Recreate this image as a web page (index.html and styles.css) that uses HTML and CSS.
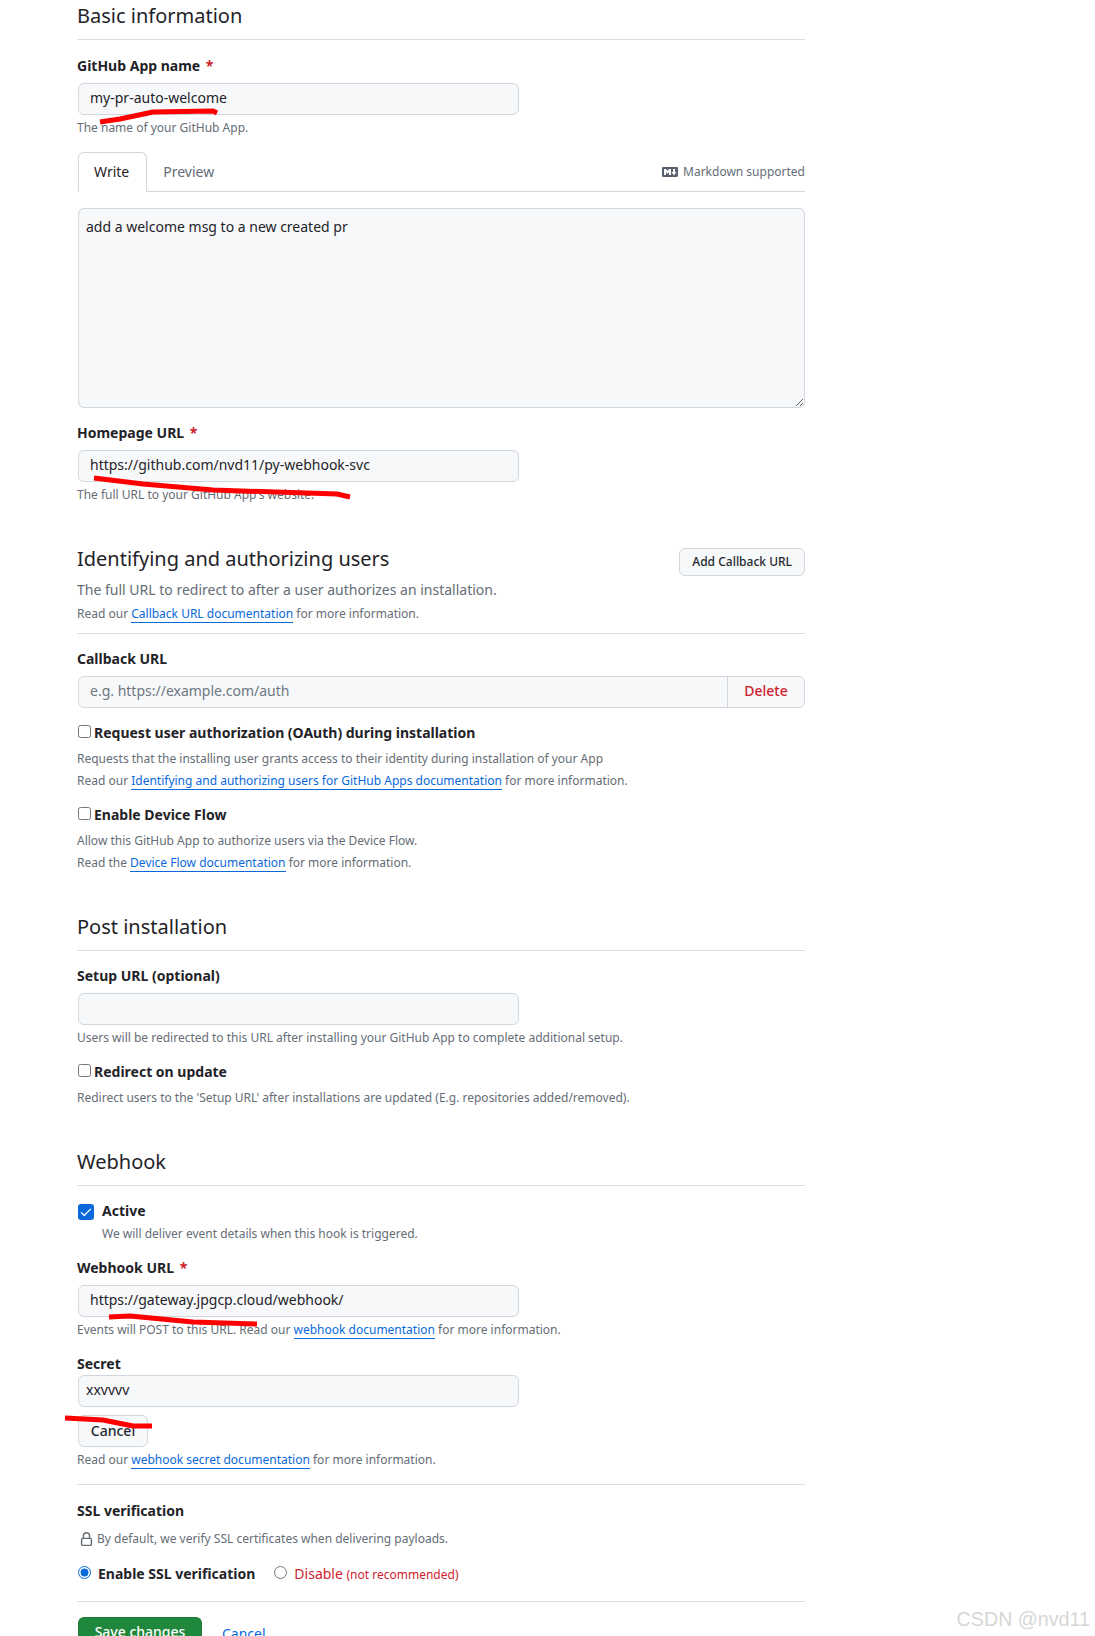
FILE: index.html
```html
<!DOCTYPE html>
<html lang="en">
<head>
  <meta charset="UTF-8" />
  <title>Edit GitHub App</title>
  <link rel="stylesheet" href="styles.css">
</head>
<body>
  <form class="container">
    <!-- Basic information -->
    <div class="subhead first">
      <h2>Basic information</h2>
    </div>
    <div class="field app-name">
      <label class="field-label">GitHub App name <span class="req">*</span></label>
      <input class="text-input short" type="text" value="my-pr-auto-welcome" />
      <p class="note">The name of your GitHub App.</p>
    </div>

    <div class="tabs">
      <span class="tab active">Write</span>
      <span class="tab">Preview</span>
      <span class="md-hint">
        <svg class="md-icon" viewBox="0 0 16 16" width="16" height="16"><path d="M14.85 3c.63 0 1.15.52 1.14 1.15v7.7c0 .63-.51 1.15-1.15 1.15H1.15C.52 13 0 12.48 0 11.84V4.15C0 3.52.52 3 1.15 3ZM9 11V5H7L5.5 7 4 5H2v6h2V8l1.5 1.92L7 8v3Zm2.99.5L14.5 8H13V5h-2v3H9.5Z"/></svg>
        Markdown supported
      </span>
    </div>
    <textarea class="desc">add a welcome msg to a new created pr</textarea>

    <div class="field homepage">
      <label class="field-label">Homepage URL <span class="req">*</span></label>
      <input class="text-input short" type="text" value="https://github.com/nvd11/py-webhook-svc" />
      <p class="note">The full URL to your GitHub App's website.</p>
    </div>

    <!-- Identifying and authorizing users -->
    <div class="auth-head">
      <div class="auth-row">
        <h2>Identifying and authorizing users</h2>
        <button type="button" class="btn btn-sm">Add Callback URL</button>
      </div>
      <p class="lead">The full URL to redirect to after a user authorizes an installation.</p>
      <p class="note">Read our <a href="#">Callback URL documentation</a> for more information.</p>
    </div>
    <div class="field callback">
      <label class="field-label">Callback URL</label>
      <div class="input-group">
        <input class="text-input grouped" type="text" placeholder="e.g. https://example.com/auth" />
        <button type="button" class="btn-delete">Delete</button>
      </div>
    </div>
    <div class="check-block oauth">
      <label class="check-label"><input type="checkbox" />Request user authorization (OAuth) during installation</label>
      <p class="note">Requests that the installing user grants access to their identity during installation of your App</p>
      <p class="note">Read our <a href="#">Identifying and authorizing users for GitHub Apps documentation</a> for more information.</p>
    </div>
    <div class="check-block device">
      <label class="check-label"><input type="checkbox" />Enable Device Flow</label>
      <p class="note">Allow this GitHub App to authorize users via the Device Flow.</p>
      <p class="note">Read the <a href="#">Device Flow documentation</a> for more information.</p>
    </div>

    <!-- Post installation -->
    <div class="subhead post">
      <h2>Post installation</h2>
    </div>
    <div class="field setup">
      <label class="field-label">Setup URL (optional)</label>
      <input class="text-input short" type="text" />
      <p class="note">Users will be redirected to this URL after installing your GitHub App to complete additional setup.</p>
    </div>
    <div class="check-block redirect">
      <label class="check-label"><input type="checkbox" />Redirect on update</label>
      <p class="note">Redirect users to the 'Setup URL' after installations are updated (E.g. repositories added/removed).</p>
    </div>

    <!-- Webhook -->
    <div class="subhead webhook">
      <h2>Webhook</h2>
    </div>
    <div class="active-row">
      <span class="blue-check">
        <svg viewBox="0 0 16 16" width="14" height="14"><path d="M13.78 4.22a.75.75 0 0 1 0 1.06l-7.25 7.25a.75.75 0 0 1-1.06 0L2.22 9.28a.751.751 0 0 1 .018-1.042.751.751 0 0 1 1.042-.018L6 10.94l6.72-6.72a.75.75 0 0 1 1.06 0Z"/></svg>
      </span>
      <div>
        <div class="active-title">Active</div>
        <p class="note active-note">We will deliver event details when this hook is triggered.</p>
      </div>
    </div>
    <div class="field webhook-url">
      <label class="field-label">Webhook URL <span class="req">*</span></label>
      <input class="text-input short" type="text" value="https://gateway.jpgcp.cloud/webhook/" />
      <p class="note">Events will POST to this URL. Read our <a href="#">webhook documentation</a> for more information.</p>
    </div>
    <div class="field secret">
      <label class="field-label tight">Secret</label>
      <input class="text-input short secret-input" type="text" value="xxvvvv" />
      <button type="button" class="btn btn-cancel">Cancel</button>
      <p class="note">Read our <a href="#">webhook secret documentation</a> for more information.</p>
    </div>

    <div class="ssl">
      <div class="ssl-title">SSL verification</div>
      <p class="note ssl-note">
        <svg class="lock" viewBox="0 0 16 16" width="16" height="16"><path d="M4 4a4 4 0 0 1 8 0v2h.25c.966 0 1.75.784 1.75 1.75v5.5A1.75 1.75 0 0 1 12.25 15h-8.5A1.75 1.75 0 0 1 2 13.25v-5.5C2 6.784 2.784 6 3.75 6H4Zm8.25 3.5h-8.5a.25.25 0 0 0-.25.25v5.5c0 .138.112.25.25.25h8.5a.25.25 0 0 0 .25-.25v-5.5a.25.25 0 0 0-.25-.25ZM10.5 6V4a2.5 2.5 0 1 0-5 0v2Z"/></svg>
        By default, we verify SSL certificates when delivering payloads.
      </p>
      <div class="radio-row">
        <label class="radio-label strong"><input type="radio" name="ssl" checked />Enable SSL verification</label>
        <label class="radio-label danger"><input type="radio" name="ssl" />Disable <small>(not recommended)</small></label>
      </div>
    </div>

    <div class="actions">
      <button type="button" class="btn-save">Save changes</button>
      <a href="#" class="cancel-link">Cancel</a>
    </div>
  </form>

  <!-- red pen marks drawn over the screenshot -->
  <svg class="scribbles" width="1095" height="1636" viewBox="0 0 1095 1636">
    <path d="M100 122 L120 119 L153 112 L213 111 L217 113" />
    <path d="M94 478 L143 484 L213 490 L337 494 L350 497" />
    <path d="M109 1317 L130 1316 L193 1322 L257 1324" />
    <path d="M65 1418 L103 1420 L133 1426 L152 1426" />
  </svg>
  <div class="watermark">CSDN @nvd11</div>
</body>
</html>
```

FILE: styles.css
```css
/* Page */
html, body {
  margin: 0;
  height: 1636px;
  overflow: hidden;
}

body {
  position: relative;
  background: #fff;
  color: #1f2328;
  font-family: "Noto Sans", sans-serif;
  font-size: 14px;
  line-height: 1.5;
}

.container {
  width: 728px;
  margin-left: 77px;
}

p {
  margin: 0;
}

a {
  color: #0969da;
  text-decoration: none;
}

/* Section headings */
h2 {
  margin: 0;
  font-size: 20px;
  font-weight: 400;
  line-height: 30px;
}

.subhead {
  border-bottom: 1px solid #d8dee4;
  padding-bottom: 8px;
}

.subhead.first {
  padding-top: 1px;
}

.subhead.post {
  margin-top: 38px;
}

.subhead.webhook {
  margin-top: 38px;
}

/* Form fields */
.field {
  margin-top: 15px;
}

.field.homepage,
.field.callback,
.field.setup {
  margin-top: 14px;
}

.field.webhook-url,
.field.secret {
  margin-top: 12px;
}

.field-label {
  display: block;
  font-weight: 700;
  line-height: 21px;
  margin-bottom: 7px;
}

.field-label.tight {
  margin-bottom: 1px;
}

.req {
  color: #cf222e;
  margin-left: 2px;
}

.text-input {
  display: block;
  box-sizing: border-box;
  height: 32px;
  padding: 0 11px 3px;
  font: 14px/20px "Noto Sans", sans-serif;
  color: #1f2328;
  background: #f6f8fa;
  border: 1px solid #d0d7de;
  border-radius: 6px;
  outline: none;
}

.text-input::placeholder {
  color: #6e7781;
}

.short {
  width: 441px;
  margin-left: 1px;
}

.note {
  font-size: 12px;
  line-height: 22px;
  color: #656d76;
}

.text-input + .note,
.btn-cancel + .note {
  margin-top: 2px;
}

.note a {
  border-bottom: 1px solid #0969da;
}

/* Write / Preview tabs */
.tabs {
  display: flex;
  align-items: flex-end;
  height: 39px;
  margin-top: 13px;
  border-bottom: 1px solid #d0d7de;
}

.tab {
  box-sizing: border-box;
  height: 40px;
  margin-bottom: -1px;
  padding: 10px 16px 0;
  line-height: 20px;
  color: #656d76;
}

.tab.active {
  margin-left: 1px;
  color: #1f2328;
  background: #fff;
  border: 1px solid #d0d7de;
  border-bottom-color: #fff;
  border-radius: 6px 6px 0 0;
  padding: 9px 17px 0 15px;
}

.md-hint {
  display: flex;
  align-items: center;
  gap: 5px;
  margin-left: auto;
  align-self: center;
  font-size: 12px;
  color: #656d76;
}

.md-icon {
  fill: #57606a;
}

.desc {
  display: block;
  box-sizing: border-box;
  width: 727px;
  height: 200px;
  margin: 16px 0 0 1px;
  padding: 7px 7px 8px;
  font: 14px/21px "Noto Sans", sans-serif;
  color: #1f2328;
  background: #f6f8fa;
  border: 1px solid #d0d7de;
  border-radius: 6px;
  outline: none;
}

/* Identifying and authorizing users */
.auth-head {
  margin-top: 38px;
  padding-bottom: 8px;
  border-bottom: 1px solid #d8dee4;
}

.auth-row {
  display: flex;
  justify-content: space-between;
  align-items: flex-start;
}

.lead {
  color: #656d76;
  line-height: 24px;
  margin-top: 2px;
  margin-bottom: 1px;
}

.btn {
  font-family: "Noto Sans", sans-serif;
  color: #24292f;
  background: #f6f8fa;
  border: 1px solid #d0d7de;
  border-radius: 6px;
}

.btn-sm {
  height: 28px;
  margin-top: 4px;
  padding: 0 12px 2px;
  font-size: 12px;
  font-weight: 500;
}

.input-group {
  display: flex;
  margin-left: 1px;
  width: 727px;
  background: #f6f8fa;
  border: 1px solid #d0d7de;
  border-radius: 6px;
  box-sizing: border-box;
  height: 32px;
}

.text-input.grouped {
  flex: 1;
  height: 30px;
  border: 0;
  border-radius: 6px 0 0 6px;
}

.btn-delete {
  width: 77px;
  padding: 0 0 3px;
  font: 500 14px "Noto Sans", sans-serif;
  color: #cf222e;
  background: transparent;
  border: 0;
  border-left: 1px solid #d0d7de;
}

/* Checkbox rows */
.check-block {
  margin-top: 14px;
}

.check-block.device {
  margin-top: 12px;
}

.check-block.redirect {
  margin-top: 12px;
}

.check-label {
  display: block;
  font-weight: 700;
  line-height: 21px;
  margin-bottom: 5px;
}

.check-label input {
  width: 13px;
  height: 13px;
  margin: 0 3px 0 1px;
}

.active-row {
  display: flex;
  gap: 8px;
  margin-top: 14px;
  margin-left: 1px;
}

.blue-check {
  display: flex;
  align-items: center;
  justify-content: center;
  width: 16px;
  height: 16px;
  margin-top: 4px;
  background: #0969da;
  border-radius: 3px;
  fill: #fff;
}

.active-title {
  font-weight: 700;
  line-height: 21px;
}

.active-note {
  margin-top: 2px;
}

.secret-input {
  padding-left: 7px;
}

.btn-cancel {
  display: block;
  width: 70px;
  height: 32px;
  margin: 8px 0 0 1px;
  padding-bottom: 3px;
  font-size: 14px;
  font-weight: 500;
}

/* SSL verification */
.ssl {
  margin-top: 13px;
  padding-top: 15px;
  padding-bottom: 16px;
  border-top: 1px solid #d8dee4;
  border-bottom: 1px solid #d8dee4;
}

.ssl-title {
  font-weight: 700;
  line-height: 21px;
}

.ssl-note {
  display: flex;
  align-items: center;
  gap: 3px;
  margin-top: 7px;
}

.lock {
  fill: #656d76;
  width: 15px;
  height: 15px;
  margin-left: 2px;
}

.radio-row {
  display: flex;
  gap: 18px;
  margin-top: 13px;
  line-height: 21px;
}

.radio-label input {
  width: 13px;
  height: 13px;
  margin: 0 7px 0 1px;
  accent-color: #0969da;
}

.radio-label.strong {
  font-weight: 700;
}

.radio-label.danger {
  color: #cf222e;
}

.radio-label small {
  font-size: 12px;
}

/* Save / Cancel */
.actions {
  display: flex;
  align-items: center;
  gap: 20px;
  margin-top: 15px;
  margin-left: 1px;
}

.btn-save {
  width: 124px;
  height: 32px;
  padding: 0 0 3px;
  font: 500 14px "Noto Sans", sans-serif;
  color: #fff;
  background: #1f883d;
  border: 1px solid rgba(31, 35, 40, 0.15);
  border-radius: 6px;
}

/* Overlays */
.scribbles {
  position: absolute;
  left: 0;
  top: 0;
  pointer-events: none;
}

.scribbles path {
  fill: none;
  stroke: #f00;
  stroke-width: 5;
  stroke-linejoin: round;
}

.watermark {
  position: absolute;
  right: 5px;
  bottom: 5px;
  font-family: "Liberation Sans", sans-serif;
  font-size: 19.7px;
  line-height: 24px;
  color: #d6d6d6;
}
```
